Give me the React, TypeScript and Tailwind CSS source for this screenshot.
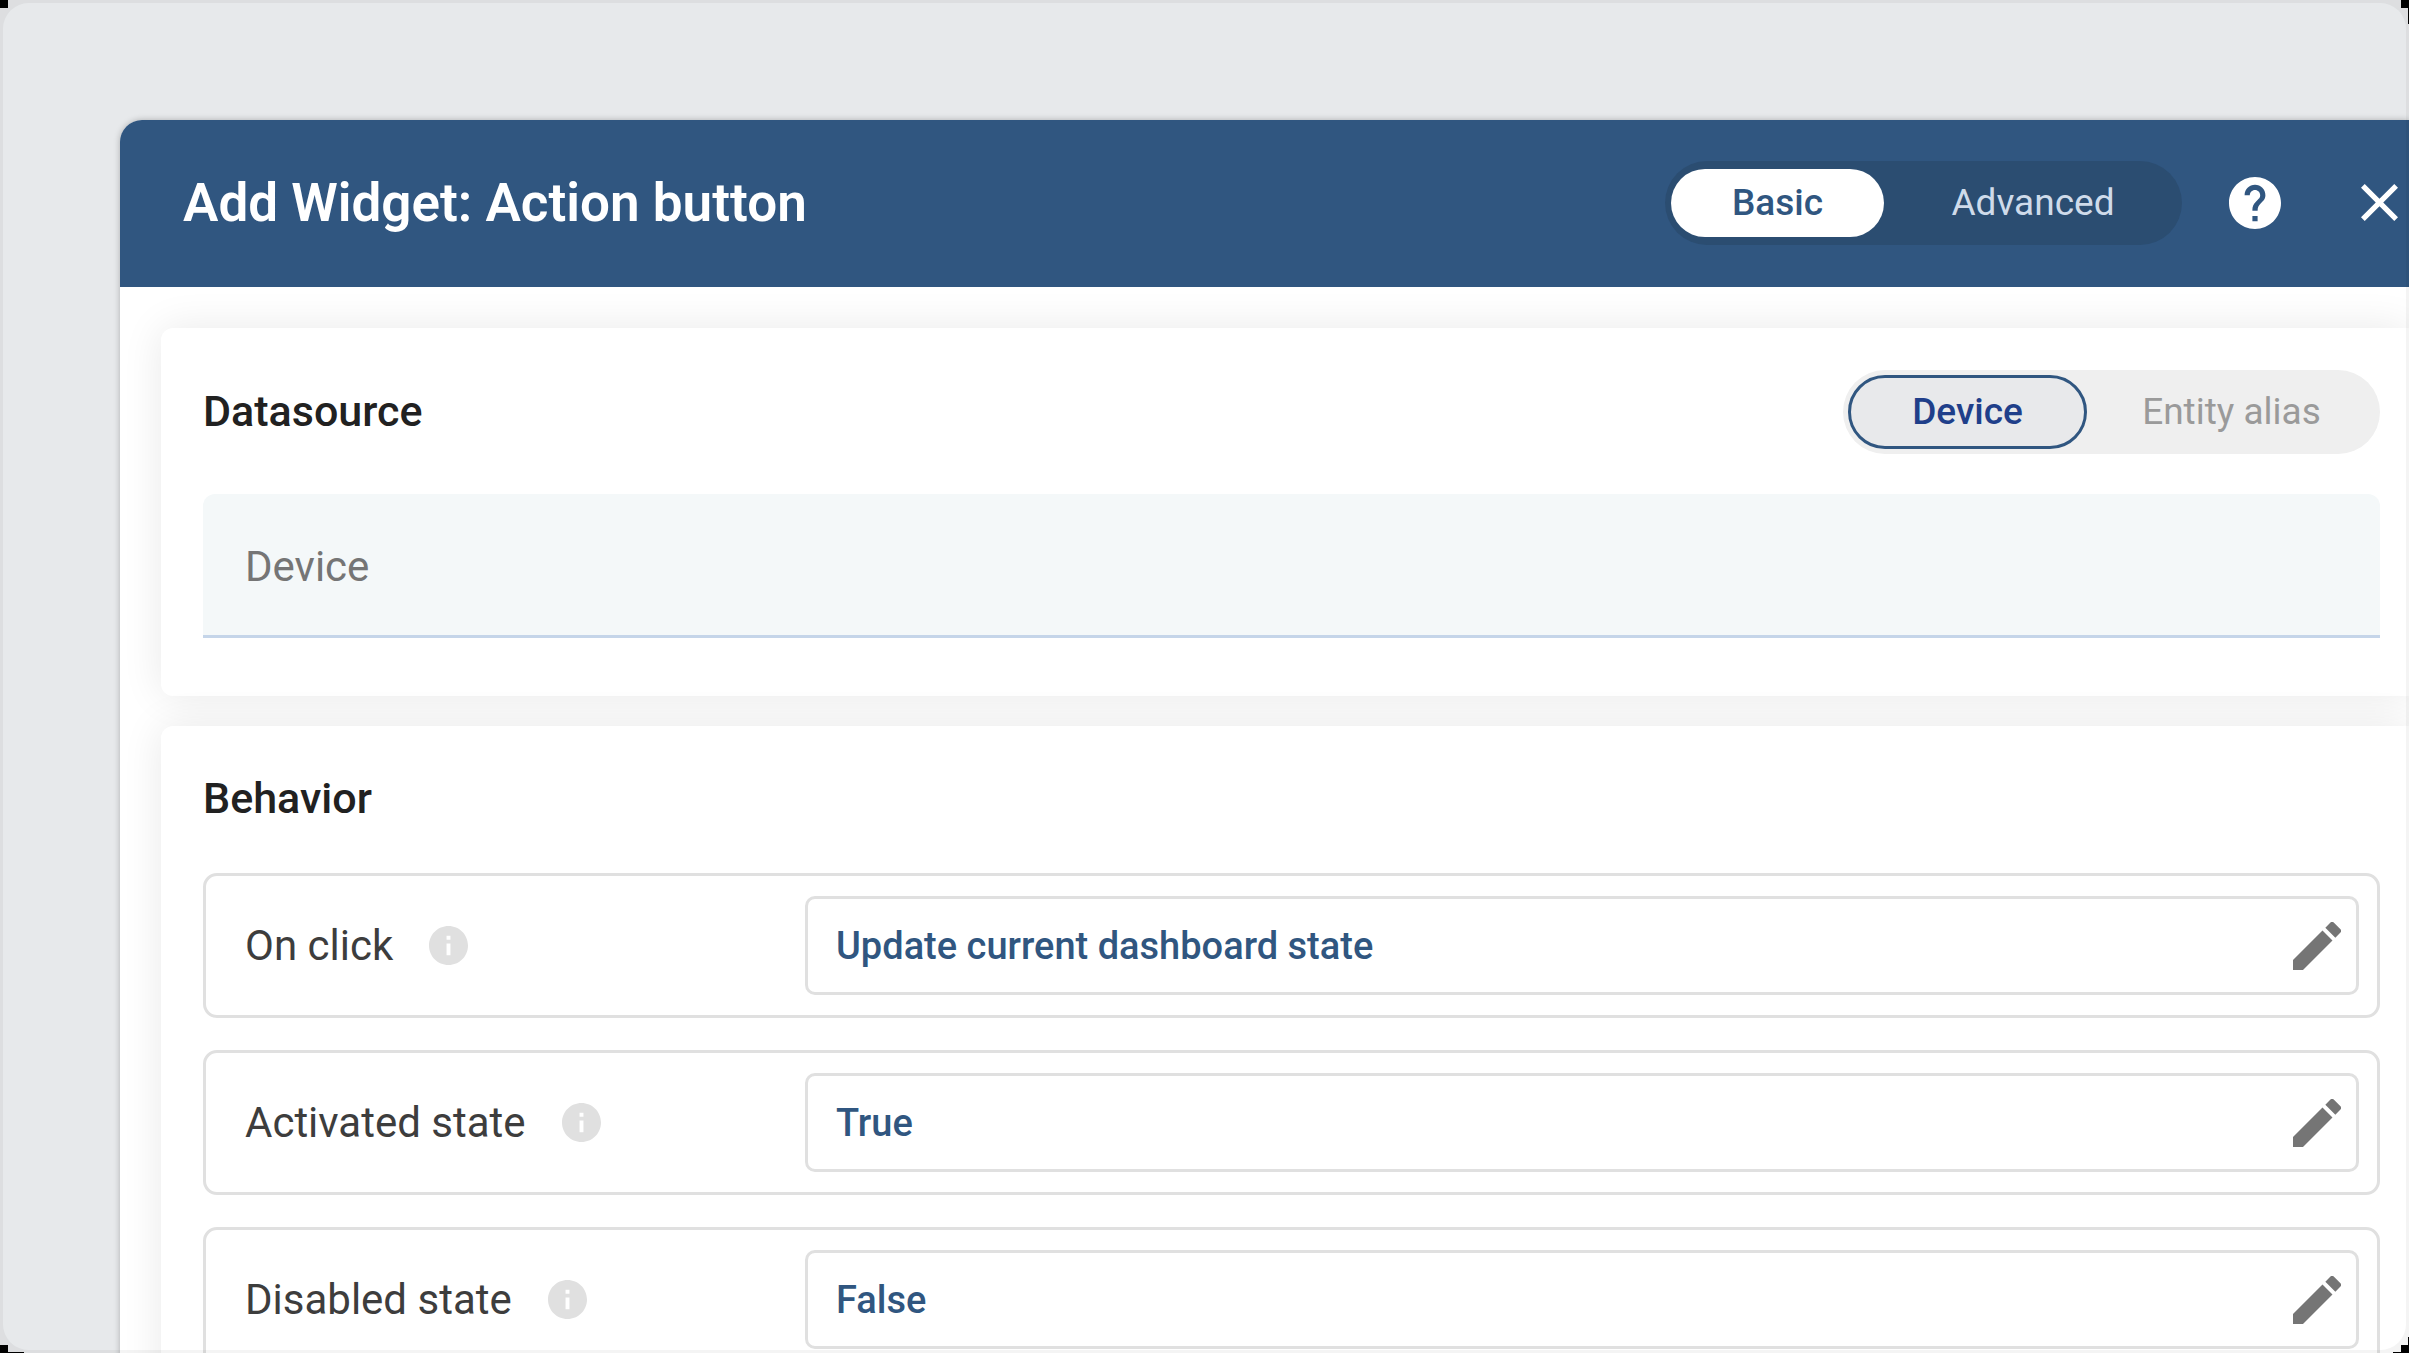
import { useState } from "react";

function SegmentedToggle({
  label,
  options,
  className,
  activeClass,
  idleClass,
}: {
  label: string;
  options: string[];
  className: string;
  activeClass: string;
  idleClass: string;
}) {
  const [value, setValue] = useState(options[0]);
  return (
    <div role="group" aria-label={label} className={`flex h-[84px] shrink-0 items-center rounded-full text-[37px] leading-[44px] ${className}`}>
      {options.map((o) => (
        <button
          key={o}
          type="button"
          aria-pressed={o === value}
          onClick={() => setValue(o)}
          className={`flex items-center justify-center rounded-full ${o === value ? activeClass : idleClass}`}
        >
          {o}
        </button>
      ))}
    </div>
  );
}

function InfoIcon() {
  return (
    <svg viewBox="2 2 20 20" className="size-[39px] shrink-0 fill-[#e0e0e0]" aria-hidden="true">
      <path d="M12 2C6.48 2 2 6.48 2 12s4.480 10 10 10 10-4.480 10-10S17.520 2 12 2zm1 15h-2v-6h2v6zm0-8h-2V7h2v2z" />
    </svg>
  );
}

function SettingRow({ id, label, value }: { id: string; label: string; value: string }) {
  return (
    <div className="flex h-[145px] items-center rounded-[14px] border-3 border-[#e0e0e0] pr-[18px] pl-[39px]">
      <div className="flex w-[560px] shrink-0 items-center gap-9">
        <label htmlFor={id} className="text-[42px] leading-[48px] text-[#3d3d3d]">
          {label}
        </label>
        <InfoIcon />
      </div>
      <div className="flex h-[99px] grow items-center rounded-[10px] border-3 border-[#e0e0e0] pr-[15px] pl-[28px]">
        <input id={id} readOnly defaultValue={value} className="min-w-0 grow bg-transparent text-[38px] leading-[44px] font-medium text-[#305680] outline-none" />
        <button type="button" aria-label={`Edit ${label}`} className="shrink-0">
          <svg viewBox="3 3 18 18" className="size-[48px] fill-[#757575]" aria-hidden="true">
            <path d="M3 17.250V21h3.750L17.810 9.940l-3.750-3.750L3 17.250zM20.710 7.040a.996.996 0 0 0 0-1.410l-2.340-2.340a.996.996 0 0 0-1.410 0l-1.830 1.830 3.750 3.750 1.830-1.830z" />
          </svg>
        </button>
      </div>
    </div>
  );
}

const rows = [
  { id: "on-click", label: "On click", value: "Update current dashboard state" },
  { id: "activated-state", label: "Activated state", value: "True" },
  { id: "disabled-state", label: "Disabled state", value: "False" },
];

export default function App() {
  return (
    <div className="relative h-screen overflow-hidden bg-[#e7e9eb] pt-[120px] pl-[120px] font-[Roboto,sans-serif]">
      <main className="min-h-full rounded-tl-[22px] bg-white shadow-[0_0_6px_rgba(0,0,0,0.25)]">
        <header className="flex h-[167px] items-center rounded-tl-[22px] bg-[#305680] pr-[11px] pb-[2px] pl-[63px] text-white">
          <h1 className="grow text-[53px] leading-[60px] font-semibold">Add Widget: Action button</h1>
          <SegmentedToggle
            label="Mode"
            options={["Basic", "Advanced"]}
            className="bg-[#2b4d71] pl-[6px]"
            activeClass="h-[68px] w-[213px] bg-white font-medium text-[#305680]"
            idleClass="h-[68px] w-[298px] text-[#cfdbea]"
          />
          <button type="button" aria-label="Help" className="ml-[47px] shrink-0">
            <svg viewBox="2 2 20 20" className="size-[52px] fill-white" aria-hidden="true">
              <path d="M12 2C6.480 2 2 6.480 2 12s4.480 10 10 10 10-4.480 10-10S17.520 2 12 2zm1 17h-2v-2h2v2zm2.070-7.750l-.9.920C13.450 12.900 13 13.500 13 15h-2v-.5c0-1.100.450-2.100 1.170-2.830l1.240-1.260c.370-.360.590-.860.590-1.410 0-1.100-.9-2-2-2s-2 .9-2 2H8c0-2.210 1.790-4 4-4s4 1.790 4 4c0 .880-.360 1.680-.930 2.250z" />
            </svg>
          </button>
          <button type="button" aria-label="Close" className="ml-20 shrink-0">
            <svg viewBox="5 5 14 14" className="size-[37px] fill-white" aria-hidden="true">
              <path d="M19 6.410L17.590 5 12 10.590 6.410 5 5 6.410 10.590 12 5 17.590 6.410 19 12 13.410 17.590 19 19 17.590 13.410 12z" />
            </svg>
          </button>
        </header>
        <div className="flex flex-col gap-[30px] overflow-hidden pt-[41px] pl-[41px]">
          <section className="h-[368px] rounded-l-xl bg-white pt-[42px] pr-[29px] pl-[42px] shadow-[0_0_42px_rgba(0,0,0,0.09)]">
            <div className="flex items-center justify-between">
              <h2 className="pb-[2px] text-[43px] leading-[48px] font-medium text-[#212121]">Datasource</h2>
              <SegmentedToggle
                label="Datasource type"
                options={["Device", "Entity alias"]}
                className="bg-[#efefef] pr-1 pl-[5px]"
                activeClass="h-[74px] w-[239px] border-3 border-[#305680] bg-[#e8e9eb] font-medium text-[#1f3f8a]"
                idleClass="h-[74px] w-[289px] text-[#9a9a9a]"
              />
            </div>
            <input
              aria-label="Device"
              placeholder="Device"
              className="mt-10 block h-[144px] w-full rounded-t-xl border-b-3 border-[#c5d5e9] bg-[#f4f8f9] px-[42px] pt-1 text-[42px] leading-[48px] outline-none placeholder:text-[#757575]"
            />
          </section>
          <section className="rounded-l-xl bg-white pt-[48px] pr-[29px] pb-10 pl-[42px] shadow-[0_0_42px_rgba(0,0,0,0.09)]">
            <h2 className="text-[43px] leading-[48px] font-medium text-[#212121]">Behavior</h2>
            <div className="mt-[51px] flex flex-col gap-8">
              {rows.map((r) => (
                <SettingRow key={r.id} {...r} />
              ))}
            </div>
          </section>
        </div>
      </main>
      <div className="pointer-events-none absolute inset-0 overflow-hidden" aria-hidden="true">
        <div className="absolute inset-[3px] rounded-[26px] shadow-[0_0_3px_30px_rgba(0,0,0,0.045)]" />
        <div className="absolute top-0 left-0 size-2 bg-black" />
        <div className="absolute top-0 right-0 size-2 bg-black" />
        <div className="absolute top-0 right-0 h-6 w-px bg-black" />
        <div className="absolute bottom-0 left-0 size-2 bg-black" />
        <div className="absolute bottom-0 left-0 h-px w-6 bg-black" />
        <div className="absolute right-0 bottom-0 size-2 bg-black" />
        <div className="absolute right-0 bottom-0 h-px w-4 bg-black" />
        <div className="absolute right-0 bottom-0 h-4 w-px bg-black" />
      </div>
    </div>
  );
}
